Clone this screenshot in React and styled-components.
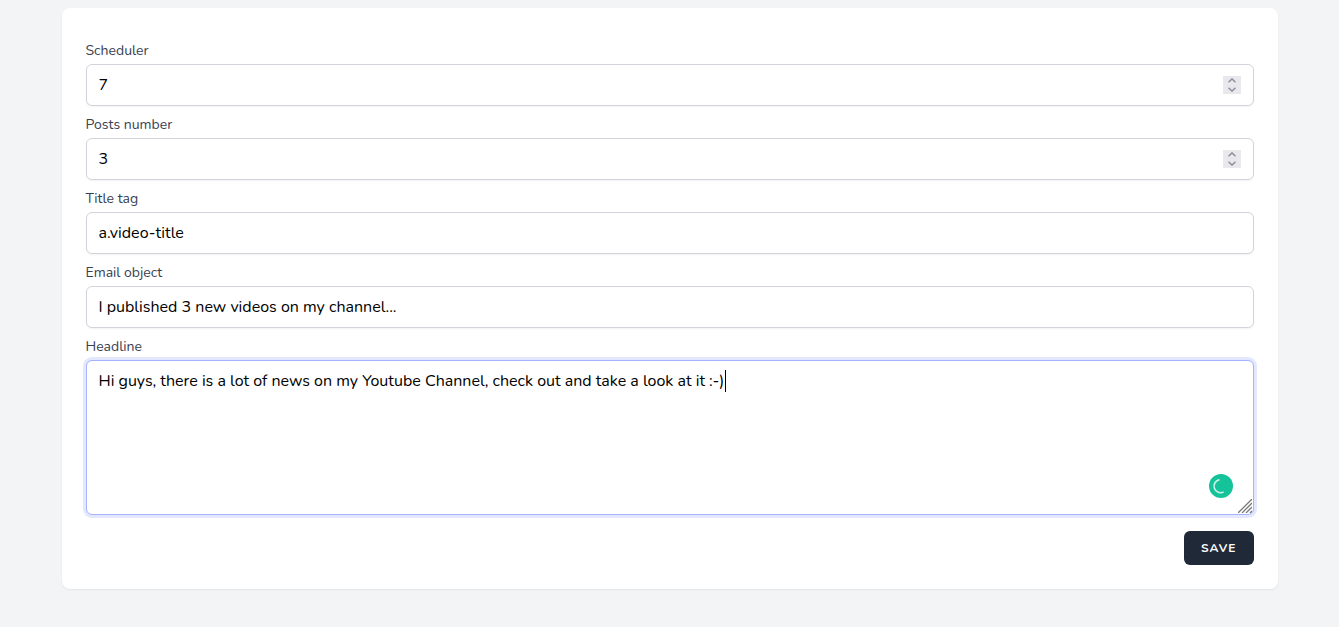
import React, { useState } from "react";
import styled, { createGlobalStyle, css } from "styled-components";

const GlobalStyle = createGlobalStyle`
  *, *::before, *::after { box-sizing: border-box; }
  body {
    margin: 0;
    background: #f3f4f6;
    font-family: Nunito, Lato, "Open Sans", sans-serif;
    color: #000;
  }
`;

const Page = styled.main`
  max-width: 1280px;
  margin: 0 auto;
  padding: 8px 32px 32px;
`;

const Card = styled.form`
  padding: 24px;
  background: #fff;
  border-radius: 8px;
  box-shadow: 0 1px 2px rgba(0, 0, 0, 0.07);
`;

const Field = styled.div`
  padding-top: 8px;
`;

const Label = styled.label`
  display: block;
  margin-bottom: 2px;
  font-size: 14px;
  line-height: 22px;
  color: #374151;
`;

const Control = styled.div`
  position: relative;
`;

const controlStyle = css`
  display: block;
  width: 100%;
  margin: 0;
  padding: 8px 12px;
  font-family: inherit;
  font-size: 16px;
  line-height: 24px;
  color: #000;
  background: #fff;
  border: 1px solid #d1d5db;
  border-radius: 6px;
  outline: none;
  box-shadow: 0 1px 2px rgba(0, 0, 0, 0.05);
`;

const Input = styled.input`
  ${controlStyle}
  height: 42px;
  appearance: textfield;
  &::-webkit-inner-spin-button { appearance: none; }
`;

const TextArea = styled.textarea`
  ${controlStyle}
  height: 155px;
  resize: none;
  border-color: #a5b4fc;
  box-shadow: 0 0 0 3px rgba(199, 210, 254, 0.5);
`;

const Stepper = styled.div`
  position: absolute;
  top: 12px;
  right: 13px;
  display: flex;
  flex-direction: column;
  background: #e9e9ed;
`;

const StepButton = styled.button`
  display: flex;
  justify-content: center;
  align-items: ${(p) => (p.$up ? "flex-end" : "flex-start")};
  width: 18px;
  height: 9px;
  padding: 2px 0;
  border: 0;
  background: transparent;
`;

const Caret = styled.span`
  position: absolute;
  top: 10px;
  left: 639px;
  width: 1px;
  height: 22px;
  background: #000;
`;

const Badge = styled.svg`
  position: absolute;
  right: 21px;
  bottom: 17px;
`;

const Grip = styled.svg`
  position: absolute;
  right: 2px;
  bottom: 2px;
`;

const Actions = styled.div`
  display: flex;
  justify-content: flex-end;
  margin-top: 16px;
`;

const SaveButton = styled.button`
  height: 34px;
  padding: 0 16px;
  border: 1px solid transparent;
  border-radius: 6px;
  background: #1f2937;
  color: #fff;
  font-family: inherit;
  font-size: 12px;
  font-weight: 700;
  line-height: 16px;
  letter-spacing: 1px;
  text-transform: uppercase;
`;

function NumberField({ id, label, initial }) {
  const [value, setValue] = useState(initial);
  return (
    <Field>
      <Label htmlFor={id}>{label}</Label>
      <Control>
        <Input id={id} type="number" value={value} onChange={(e) => setValue(e.target.value)} />
        <Stepper>
          <StepButton $up type="button" aria-label={`Increase ${label}`} onClick={() => setValue(Number(value) + 1)}>
            <svg width="8" height="5" viewBox="0 0 8 5" fill="none" stroke="#8f8f9d" strokeWidth="1.5">
              <path d="M.5 4.2 4 .9l3.500 3.300" />
            </svg>
          </StepButton>
          <StepButton type="button" aria-label={`Decrease ${label}`} onClick={() => setValue(Number(value) - 1)}>
            <svg width="8" height="5" viewBox="0 0 8 5" fill="none" stroke="#8f8f9d" strokeWidth="1.5">
              <path d="M.5.8 4 4.100l3.500-3.300" />
            </svg>
          </StepButton>
        </Stepper>
      </Control>
    </Field>
  );
}

function TextField({ id, label, initial }) {
  return (
    <Field>
      <Label htmlFor={id}>{label}</Label>
      <Input id={id} type="text" defaultValue={initial} />
    </Field>
  );
}

export default function App() {
  return (
    <>
      <GlobalStyle />
      <Page>
        <Card onSubmit={(e) => e.preventDefault()}>
          <NumberField id="scheduler" label="Scheduler" initial="7" />
          <NumberField id="posts" label="Posts number" initial="3" />
          <TextField id="title-tag" label="Title tag" initial="a.video-title" />
          <TextField id="email-object" label="Email object" initial="I published 3 new videos on my channel..." />
          <Field>
            <Label htmlFor="headline">Headline</Label>
            <Control>
              <TextArea
                id="headline"
                spellCheck={false}
                defaultValue="Hi guys, there is a lot of news on my Youtube Channel, check out and take a look at it :-)"
              />
              <Caret />
              <Badge width="24" height="24" viewBox="0 0 24 24" aria-hidden="true">
                <circle cx="12" cy="12" r="12" fill="#15c39a" />
                <path d="M10.500 5.600A6.600 6.600 0 1 0 14.600 18" fill="none" stroke="#c5f0e5" strokeWidth="1.700" />
              </Badge>
              <Grip width="14" height="14" viewBox="0 0 14 14" stroke="#777" strokeWidth="1.300" aria-hidden="true">
                <path d="M0 14 14 0M4 14 14 4M8 14l6-6M12 14l2-2" />
              </Grip>
            </Control>
          </Field>
          <Actions>
            <SaveButton type="submit">Save</SaveButton>
          </Actions>
        </Card>
      </Page>
    </>
  );
}
